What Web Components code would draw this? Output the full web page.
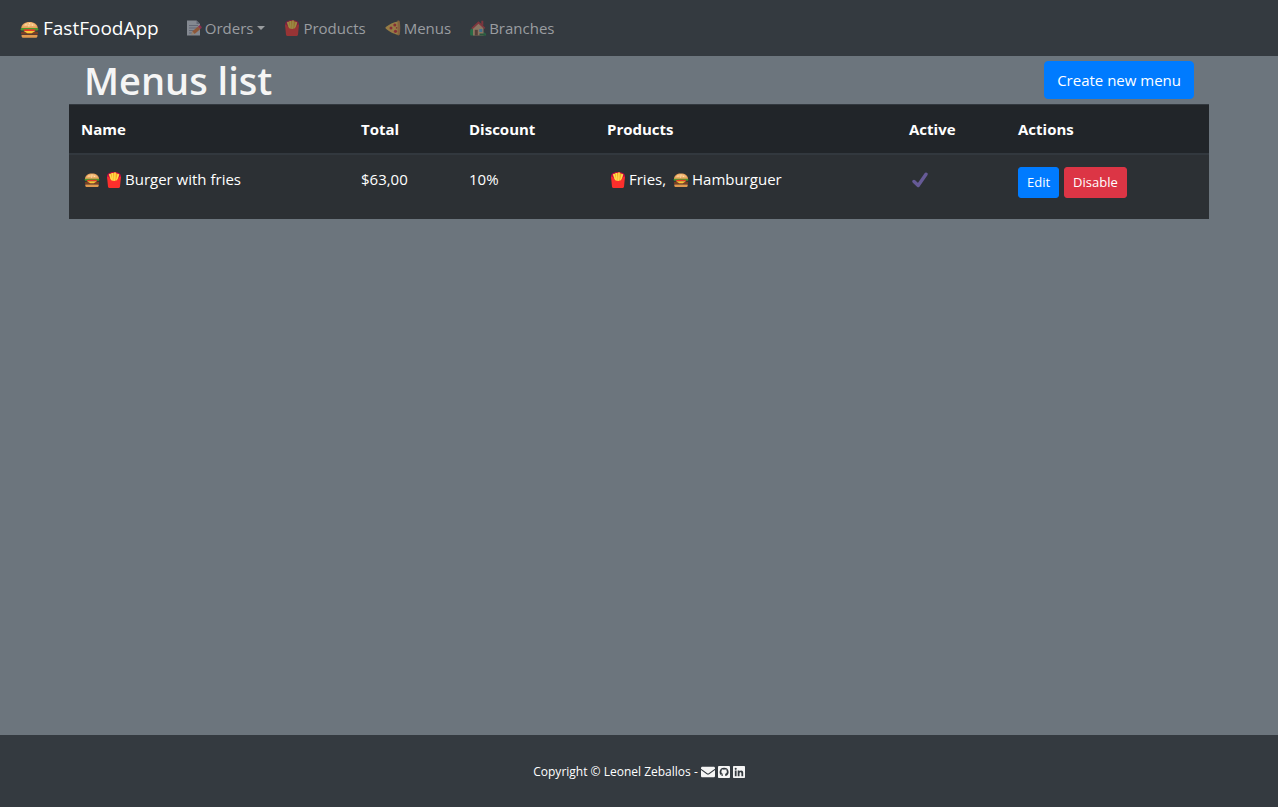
<!DOCTYPE html>
<html lang="en">
<head>
<meta charset="utf-8">
<meta name="viewport" content="width=device-width, initial-scale=1">
<title>FastFoodApp</title>
<style>
  html, body { height: 100%; margin: 0; }
  body {
    background: #6c757d;
    color: #fff;
    font: 15px/24px "Open Sans", "Noto Sans", sans-serif;
  }
</style>
</head>
<body>
<food-app></food-app>

<script>
const GLYPHS = {
  burger: `
    <path fill="#e8a35c" d="M1 7.200C1 3.600 4 1.600 8 1.600s7 2 7 5.600z"/>
    <path fill="#f4bd7c" d="M2.500 5.300C3.500 3 5.600 2.200 8 2.200s4.500.8 5.500 3.100z"/>
    <g fill="#fff0c8"><circle cx="5" cy="4" r=".5"/><circle cx="8" cy="3" r=".5"/><circle cx="10.500" cy="4.200" r=".5"/><circle cx="7.500" cy="5" r=".5"/></g>
    <rect x=".6" y="6.800" width="14.800" height="2" rx="1" fill="#4a9a2c"/>
    <rect x="3" y="7.800" width="10" height="1.400" rx=".7" fill="#e5382b"/>
    <rect x=".8" y="9.800" width="14.400" height="2.400" rx="1.100" fill="#7b3f24"/>
    <path fill="#f9c838" d="M3 9.200h10l-3.200 2H6.200z"/>
    <path fill="#e09a50" d="M1.300 12.600h13.400v.8c0 1-.8 1.600-1.800 1.600H3.100c-1 0-1.800-.6-1.800-1.600z"/>`,
  fries: `
    <path fill="#c40a45" d="M1 4.500C1 1.600 4.200.1 8 .1s7 1.500 7 4.400L13.600 10H2.400z"/>
    <path fill="#f6a91c" d="M3 2.200l2-.4.500-.9 2 .1.500-.5 2 .2.600.9 2.600.6L11.200 10H4.900z"/>
    <g fill="#ffd94f"><path d="M3 2.200l1.500-.4L6.800 9H5.400z"/><path d="M5.500.9l1.500.1.700 8H6.500z"/><path d="M8.300.6h1.500L9.300 9H8z"/><path d="M11.600 1.800l1.500.6L11 9H9.800z"/></g>
    <path fill="#fb2f2c" d="M1 4.600c1.300.2 2.400 1 3 2.200.8 1.500 2.200 2.200 4 2.200s3.200-.7 4-2.200c.6-1.200 1.700-2 3-2.200l-1 10.100c0 .7-.6 1.200-1.300 1.200H3.300c-.7 0-1.300-.5-1.300-1.200z"/>`,
  note: `
    <path fill="#d4d7e2" d="M1 .5h9.500L14 4v11.500H1z"/>
    <path fill="#9297ab" d="M10.500.5L14 4h-3.500zM3 5h9v1H3zM3 7.500h8v1H3zM3 10h5v1H3zM3 12.500h4v1H3z"/>
    <path fill="#e87532" d="M6.200 11.500l5.800-5L14.400 9l-5.800 5z"/>
    <path fill="#e5295e" d="M12 6.500l1.100-.9c.5-.4 1-.4 1.400.1l1 1.100c.4.500.3 1-.1 1.400L14.400 9z"/>
    <path fill="#f5cda0" d="M6.200 11.500L8.600 14l-3.500.9z"/>`,
  pizza: `
    <path fill="#d9883b" d="M12.500.5c1.200-.2 2.200.3 2.300 1.300.6 4 .6 8.500 0 12.500-.1 1-1.200 1.300-2.300 1z"/>
    <path fill="#f7be4a" d="M12.800 1.500v13.300C9 14 3.500 11.300.7 8.500.3 8 .3 7.500.8 7.100 4 4.500 8.600 2 12.800 1.500z"/>
    <g fill="#d8232e"><circle cx="9.800" cy="5" r="1.500"/><circle cx="6" cy="8" r="1.500"/><circle cx="10.500" cy="11.300" r="1.600"/><circle cx="11.600" cy="7.900" r=".8"/></g>`,
  house: `
    <path fill="#1f9c4d" d="M.2 11.500C0 9.600 1 8.600 2.200 8.500L5 9v6.500H.5L0 14zM10 12l5 .7c.8.8 1.200 2 .9 2.800H10z"/>
    <path fill="#e0b184" d="M3 7.500L8.500 2.600 13.500 7v8.500H3z"/>
    <path fill="#c9343d" d="M11.300.8h2v4.600l-2-1.600zM1.300 8.100L8.500 1.300l6.800 6.400-1.100 1.300-5.700-5.200L2.500 9.300z"/>
    <path fill="#7a4535" d="M4.800 9.800h3v5.700h-3z"/>
    <path fill="#47a6de" d="M9.300 9h3v3h-3z"/>
    <path fill="#26713d" d="M9.500 13.500h5.200v2H9.500z"/>`,
  check: `
    <path fill="none" stroke="#665a96" stroke-width="3.400" stroke-linecap="round" stroke-linejoin="round" d="M2 9.500l4.200 4L14 2.200"/>`,
};

const SITES = {
  mail: `<path d="M1.500 2h13c.8 0 1.500.7 1.500 1.500v.7L8.800 9.500c-.5.400-1.100.4-1.600 0L0 4.200v-.7C0 2.700.7 2 1.500 2zM0 5.700l6.600 4.900c.9.600 1.900.6 2.800 0L16 5.700v6.800c0 .8-.7 1.500-1.500 1.500h-13C.7 14 0 13.300 0 12.500z"/>`,
  github: `<path fill-rule="evenodd" d="M1.500 0h13c.9 0 1.500.6 1.500 1.500v13c0 .9-.6 1.500-1.500 1.500h-13C.6 16 0 15.400 0 14.500v-13C0 .6.600 0 1.500 0zM8 2.200a5.800 5.800 0 0 0-2.400 11.100c.500.200.800-.1.800-.4v-1.300c-1.500.3-2.100-.3-2.400-1.100.5.100.9.600 1.300.8.400.2.800.1 1.200 0 .1-.4.300-.7.600-.9-1.700-.2-2.600-1.100-2.600-2.800 0-.7.2-1.300.7-1.800-.2-.4-.1-1 .1-1.500.6 0 1.200.3 1.700.6.700-.2 1.600-.2 2.300 0 .5-.3 1-.6 1.700-.6.200.5.200 1.100.1 1.500.4.500.7 1.100.7 1.800 0 1.700-1 2.600-2.700 2.800.3.300.6.700.6 1.300v1.300c0 .300.200.600.700.400A5.800 5.800 0 0 0 8 2.200z"/>`,
  linkedin: `<path fill-rule="evenodd" d="M1 0h14c.6 0 1 .4 1 1v14c0 .6-.4 1-1 1H1c-.6 0-1-.4-1-1V1c0-.6.400-1 1-1zM2.400 6.100v7.500h2.400V6.100zM3.600 2.400a1.400 1.400 0 1 0 0 2.800 1.400 1.400 0 0 0 0-2.800zM6.300 6.100v7.500h2.400V9.900c0-2.200 2.500-2.300 2.500 0v3.700h2.400V9c0-3.600-3.600-3.700-5-1.900v-1z"/>`,
};

function define(name, html, render) {
  const template = document.createElement('template');
  template.innerHTML = html;
  customElements.define(name, class extends HTMLElement {
    static observedAttributes = ['name'];
    constructor() {
      super();
      this.attachShadow({ mode: 'open' }).append(template.content.cloneNode(true));
    }
    attributeChangedCallback(attribute, before, value) {
      if (render) render(this.shadowRoot, value);
    }
  });
}

define('food-icon', `
  <style>
    :host { display: inline-flex; justify-content: center; width: 22px; height: 16px; vertical-align: -3px; }
    :host([large]) { width: 27px; height: 19px; padding-top: 3px; }
    svg { height: 100%; aspect-ratio: 1; }
  </style>
  <svg viewBox="0 0 16 16" aria-hidden="true"></svg>`,
  (root, name) => { root.querySelector('svg').innerHTML = GLYPHS[name]; });

define('site-link', `
  <style>
    :host { display: inline-flex; width: 12px; }
    :host([name="mail"]) { width: 14px; }
    a { display: flex; width: 100%; color: #f5f5f5; }
    svg { width: 100%; aspect-ratio: 1; fill: currentColor; }
  </style>
  <a href="#"><svg viewBox="0 0 16 16" aria-hidden="true"></svg></a>`,
  (root, name) => {
    root.querySelector('svg').innerHTML = SITES[name];
    root.querySelector('a').setAttribute('aria-label', name);
  });

define('nav-link', `
  <style>
    :host { display: block; }
    a { display: flex; align-items: center; padding: 8px; color: #9a9da0; text-decoration: none; white-space: nowrap; }
    food-icon { opacity: .5; }
    i { display: none; margin-left: 4px; border: 4px solid transparent; border-top-color: currentColor; border-bottom: 0; }
    :host([dropdown]) i { display: block; }
  </style>
  <a href="#"><food-icon></food-icon><slot></slot><i></i></a>`,
  (root, name) => root.querySelector('food-icon').setAttribute('name', name));

define('app-navbar', `
  <style>
    :host { display: block; background: #343a40; }
    nav { display: flex; align-items: center; padding: 8px 16px; }
    .brand { display: flex; align-items: center; margin-right: 16px; color: #fff; font-size: 19px; line-height: 30px; text-decoration: none; }
  </style>
  <nav>
    <a class="brand" href="#"><food-icon name="burger" large></food-icon>FastFoodApp</a>
    <nav-link name="note" dropdown>Orders</nav-link>
    <nav-link name="fries">Products</nav-link>
    <nav-link name="pizza">Menus</nav-link>
    <nav-link name="house">Branches</nav-link>
  </nav>`);

define('action-button', `
  <style>
    :host { display: inline-block; vertical-align: top; }
    button {
      display: block; margin: 0; padding: 6px 12px; border: 1px solid #007bff; border-radius: 4px;
      background: #007bff; color: #fff; font: inherit; white-space: nowrap; cursor: pointer;
    }
    :host([small]) button { padding: 4px 8px; border-radius: 3px; font-size: 13px; line-height: 21px; }
    :host([danger]) button { background: #dc3545; border-color: #dc3545; }
  </style>
  <button type="button"><slot></slot></button>`);

define('page-heading', `
  <style>
    :host { display: flex; align-items: center; justify-content: space-between; padding: 0 15px; }
    h1 { margin: 0; color: #f5f5f5; font-size: 38px; line-height: 48px; font-weight: 600; }
  </style>
  <h1><slot></slot></h1>
  <slot name="action"></slot>`);

define('menus-table', `
  <style>
    :host { display: block; }
    table { width: 100%; table-layout: fixed; border-collapse: separate; border-spacing: 0; background: #212529; }
    th, td { padding: 12px; text-align: left; vertical-align: top; }
    th { border-top: 1px solid #32383e; border-bottom: 2px solid #32383e; font-weight: 700; }
    td { background: #2c3034; }
    .actions { display: flex; gap: 5px; height: 40px; }
    .name { width: 256px; }
    .total { width: 84px; }
    .discount { width: 114px; }
    .products { width: 278px; }
    .active { width: 85px; }
  </style>
  <table>
    <thead>
      <tr>
        <th class="name" scope="col">Name</th>
        <th class="total" scope="col">Total</th>
        <th class="discount" scope="col">Discount</th>
        <th class="products" scope="col">Products</th>
        <th class="active" scope="col">Active</th>
        <th scope="col">Actions</th>
      </tr>
    </thead>
    <tbody>
      <tr>
        <td><food-icon name="burger"></food-icon><food-icon name="fries"></food-icon>Burger with fries</td>
        <td>$63,00</td>
        <td>10%</td>
        <td><food-icon name="fries"></food-icon>Fries, <food-icon name="burger"></food-icon>Hamburguer</td>
        <td><food-icon name="check"></food-icon></td>
        <td>
          <div class="actions">
            <action-button small>Edit</action-button>
            <action-button small danger>Disable</action-button>
          </div>
        </td>
      </tr>
    </tbody>
  </table>`);

define('app-footer', `
  <style>
    :host { display: block; padding: 25px 16px 23px; background: #343a40; font-size: 12px; }
    footer { display: flex; align-items: center; justify-content: center; gap: 3px; }
  </style>
  <footer>
    <span>Copyright © Leonel Zeballos -</span>
    <site-link name="mail"></site-link>
    <site-link name="github"></site-link>
    <site-link name="linkedin"></site-link>
  </footer>`);

define('food-app', `
  <style>
    :host { display: flex; flex-direction: column; min-height: 100%; }
    main { flex: 1; box-sizing: border-box; width: 100%; max-width: 1140px; margin: 0 auto; }
  </style>
  <app-navbar></app-navbar>
  <main>
    <page-heading>Menus list<action-button slot="action">Create new menu</action-button></page-heading>
    <menus-table></menus-table>
  </main>
  <app-footer></app-footer>`);
</script>
</body>
</html>
